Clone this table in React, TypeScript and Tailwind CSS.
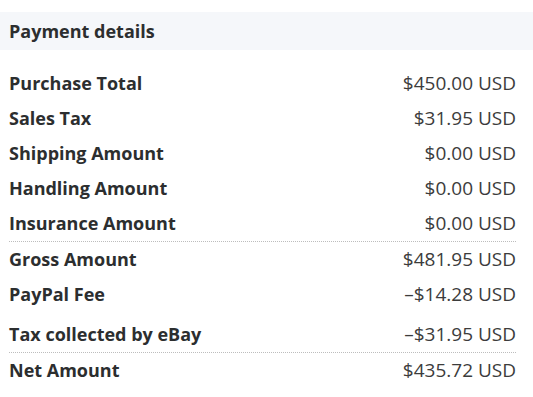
const rows1 = [
  ["Purchase Total", "$450.00 USD"],
  ["Sales Tax", "$31.95 USD"],
  ["Shipping Amount", "$0.00 USD"],
  ["Handling Amount", "$0.00 USD"],
  ["Insurance Amount", "$0.00 USD"],
];

const rows2 = [
  ["Gross Amount", "$481.95 USD"],
  ["PayPal Fee", "–$14.28 USD"],
];

function Row({ label, value }: { label: string; value: string }) {
  return (
    <div className="flex h-[35px] items-center justify-between">
      <span className="text-[18px] font-bold text-[#2c2e2f]">{label}</span>
      <span className="text-[19px] font-normal text-[#3c3c3c]">{value}</span>
    </div>
  );
}

export default function App() {
  return (
    <div className="min-h-screen w-[533px] bg-white pt-3 font-['Open_Sans',sans-serif]">
      <div className="flex h-[38px] items-center bg-[#f5f7fa] px-[9px]">
        <h2 className="text-[18px] font-bold text-[#2c2e2f]">Payment details</h2>
      </div>

      <div className="mt-4 pl-[9px] pr-[17px]">
        {rows1.map(([l, v]) => <Row key={l} label={l} value={v} />)}
        <div className="border-t border-dotted border-[#bdbdbd]" />
        {rows2.map(([l, v]) => <Row key={l} label={l} value={v} />)}
        <div className="mt-[5px]">
          <Row label="Tax collected by eBay" value="–$31.95 USD" />
        </div>
        <div className="border-t border-dotted border-[#bdbdbd]" />
        <Row label="Net Amount" value="$435.72 USD" />
      </div>
    </div>
  );
}
